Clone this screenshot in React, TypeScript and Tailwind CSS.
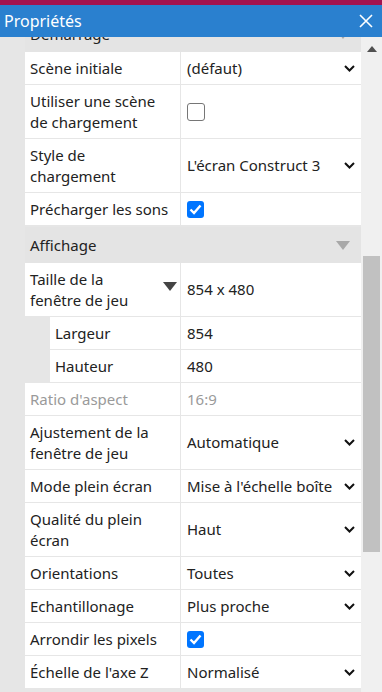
import React from 'react';

type Row =
    | { kind: 'section'; label: string; hidden?: boolean }
    | {
          kind: 'prop';
          label: string;
          value?: string;
          select?: boolean;
          check?: boolean;
          checked?: boolean;
          tall?: boolean;
          indent?: boolean;
          muted?: boolean;
          expand?: boolean;
      };

const rows: Row[] = [
    { kind: 'section', label: 'Démarrage', hidden: true },
    { kind: 'prop', label: 'Scène initiale', value: '(défaut)', select: true },
    { kind: 'prop', label: 'Utiliser une scène de chargement', check: true, tall: true },
    { kind: 'prop', label: 'Style de chargement', value: "L'écran Construct 3", select: true, tall: true },
    { kind: 'prop', label: 'Précharger les sons', check: true, checked: true },
    { kind: 'section', label: 'Affichage' },
    { kind: 'prop', label: 'Taille de la fenêtre de jeu', value: '854 x 480', tall: true, expand: true },
    { kind: 'prop', label: 'Largeur', value: '854', indent: true },
    { kind: 'prop', label: 'Hauteur', value: '480', indent: true },
    { kind: 'prop', label: "Ratio d'aspect", value: '16:9', muted: true },
    { kind: 'prop', label: 'Ajustement de la fenêtre de jeu', value: 'Automatique', select: true, tall: true },
    { kind: 'prop', label: 'Mode plein écran', value: "Mise à l'échelle boîte", select: true },
    { kind: 'prop', label: 'Qualité du plein écran', value: 'Haut', select: true, tall: true },
    { kind: 'prop', label: 'Orientations', value: 'Toutes', select: true },
    { kind: 'prop', label: 'Echantillonage', value: 'Plus proche', select: true },
    { kind: 'prop', label: 'Arrondir les pixels', check: true, checked: true },
    { kind: 'prop', label: "Échelle de l'axe Z", value: 'Normalisé', select: true },
];

function Chevron() {
    return (
        <svg width="11" height="7" viewBox="0 0 11 7" className="shrink-0">
            <polyline points="1,1 5.5,5.5 10,1" fill="none" stroke="#111" strokeWidth="2" />
        </svg>
    );
}

function Checkbox({ checked }: { checked?: boolean }) {
    if (checked) {
        return (
            <div className="w-[17px] h-[17px] rounded-[3px] bg-[#0075ff] flex items-center justify-center">
                <svg width="13" height="11" viewBox="0 0 13 11">
                    <polyline points="1.5,5.5 5,9 11.5,1.5" fill="none" stroke="#fff" strokeWidth="2.4" />
                </svg>
            </div>
        );
    }
    return <div className="w-[18px] h-[18px] rounded-[3px] border border-[#767676] bg-white" />;
}

export default function App() {
    return (
        <div
            className="w-[382px] h-[692px] overflow-hidden flex flex-col bg-[#e6e6e6] text-[15px] text-[#222]"
            style={{ fontFamily: '"Noto Sans", "Open Sans", sans-serif' }}
        >
            <div className="h-[5px] bg-[#a3134f] shrink-0" />
            {/* Title bar */}
            <div className="h-[32px] bg-[#2a80cf] flex items-center justify-between pl-[4px] pr-[9px] shrink-0 relative z-10">
                <span className="text-white text-[16px]">Propriétés</span>
                <svg width="14" height="14" viewBox="0 0 14 14">
                    <path d="M1 1L13 13M13 1L1 13" stroke="#fff" strokeWidth="1.6" />
                </svg>
            </div>

            <div className="flex flex-1 min-h-0">
                {/* Property grid */}
                <div className="flex-1 min-w-0 overflow-hidden">
                    <div className="pl-[25px]">
                        {rows.map((r, i) => {
                            if (r.kind === 'section') {
                                return (
                                    <div
                                        key={i}
                                        className={
                                            'h-[36px] bg-[#e4e4e4] flex items-center justify-between pl-[5px] pr-[11px] ' +
                                            (r.hidden ? '-mt-[21px]' : 'mt-[1px]')
                                        }
                                    >
                                        <span>{r.label}</span>
                                        <svg width="14" height="9" viewBox="0 0 14 9">
                                            <polygon points="0,0 14,0 7,9" fill="#a8a8a8" />
                                        </svg>
                                    </div>
                                );
                            }
                            return (
                                <div
                                    key={i}
                                    className={
                                        'flex border-b border-[#e6e6e6] bg-white ' +
                                        (r.tall ? 'h-[54px]' : 'h-[33px]') +
                                        (r.indent ? ' ml-[25px]' : '') +
                                        (r.muted ? ' text-[#9a9a9a]' : '')
                                    }
                                >
                                    <div
                                        className={
                                            'flex items-center justify-between border-r border-[#e6e6e6] pl-[5px] pr-[3px] leading-[21px] ' +
                                            (r.indent ? 'w-[131px]' : 'w-[156px]')
                                        }
                                    >
                                        <span className={r.expand ? 'w-[110px]' : r.tall ? 'w-[132px]' : ''}>{r.label}</span>
                                        {r.expand && (
                                            <svg width="14" height="9" viewBox="0 0 14 9" className="shrink-0 mb-[6px]">
                                                <polygon points="0,0 14,0 7,9" fill="#444" />
                                            </svg>
                                        )}
                                    </div>
                                    <div className="flex-1 flex items-center justify-between pl-[6px] pr-[6px]">
                                        {r.check ? (
                                            <Checkbox checked={r.checked} />
                                        ) : (
                                            <span className="whitespace-nowrap">{r.value}</span>
                                        )}
                                        {r.select && <Chevron />}
                                    </div>
                                </div>
                            );
                        })}
                    </div>
                </div>

                {/* Scrollbar */}
                <div className="w-[21px] bg-[#f0f0f0] shrink-0 flex flex-col items-center">
                    <svg width="10" height="6" viewBox="0 0 10 6" className="mt-[9px]">
                        <polygon points="5,0 10,6 0,6" fill="#505050" />
                    </svg>
                    <div className="w-[17px] h-[296px] bg-[#c1c1c1] mt-[204px]" />
                </div>
            </div>
        </div>
    );
}
